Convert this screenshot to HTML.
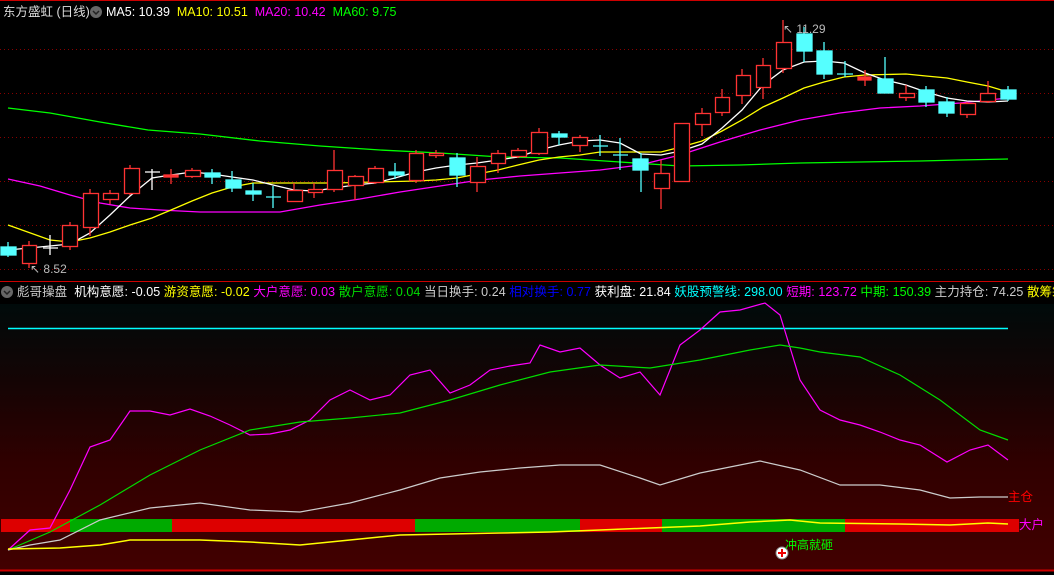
<!DOCTYPE html>
<html><head><meta charset="utf-8"><style>
html,body{margin:0;padding:0;background:#000;width:1054px;height:575px;overflow:hidden;font-family:"Liberation Sans","Noto Sans CJK SC",sans-serif;}
.t{position:absolute;font-size:12.5px;white-space:nowrap;line-height:16px;}
</style></head><body>
<div style="position:absolute;left:0;top:304px;width:1054px;height:266px;background:linear-gradient(#000a0a 0%,#150404 30%,#300000 60%,#420000 100%);"></div>
<svg width="1054" height="575" style="position:absolute;left:0;top:0">
<line x1="0" y1="0.5" x2="1054" y2="0.5" stroke="#c00" />
<line x1="0" y1="281.5" x2="1054" y2="281.5" stroke="#c00"/>
<line x1="0" y1="570.5" x2="1054" y2="570.5" stroke="#c00" stroke-width="2"/>
<g stroke="#800" stroke-dasharray="1,3">
<line x1="0" y1="49.5" x2="1054" y2="49.5"/><line x1="0" y1="93.5" x2="1054" y2="93.5"/><line x1="0" y1="137.5" x2="1054" y2="137.5"/><line x1="0" y1="181.5" x2="1054" y2="181.5"/><line x1="0" y1="225.5" x2="1054" y2="225.5"/><line x1="0" y1="269.5" x2="1054" y2="269.5"/>
</g>
<g fill="none" stroke-width="1.3">
<polyline stroke="#0f0" points="8,108 50,113 100,122 148,130 200,134 260,141 320,146 380,150 440,153 500,157 560,158 620,162 680,166 740,165 800,163 860,162 920,161 960,160 1008,159"/>
<polyline stroke="#f0f" points="8,179 40,186 70,195 100,203 130,208 160,210 200,212 240,212 280,212 320,205 360,199 400,192 440,186 480,180 520,176 560,173 600,170 640,165 680,155 720,142 760,130 800,120 840,113 880,108 920,106 960,103 1008,98"/>
<polyline stroke="#ff0" points="8,225 50,240 70,242 90,238 110,232 130,225 152,218 171,210 192,201 212,193 232,187 253,183 294,183 334,183 375,182 416,181 436,180 457,178 477,174 498,170 518,165 539,160 559,157 580,155 600,152 661,152 681,147 702,141 722,131 742,120 763,107 783,98 804,88 824,82 844,77 865,75 906,74 926,76 947,78 967,82 988,86 1008,92"/>
<polyline stroke="#fff" points="8,250 50,246 70,244 90,233 110,215 130,196 152,178 171,175 192,172 212,174 232,177 253,180 273,185 294,190 314,191 334,188 355,185 375,183 395,178 416,172 436,168 457,165 477,163 498,160 518,157 539,150 559,145 580,141 600,140 620,143 641,154 661,155 681,151 702,144 722,128 742,110 763,85 783,70 804,62 824,61 844,63 865,73 885,80 906,85 926,92 947,98 967,101 988,102 1008,101"/>
</g>
<g stroke="#f33" fill="none" stroke-width="1.3">
<path d="M29 241V268M70 222V250M90 189V236M110 190V204M130 165V195M171 169V184M192 168V178M294 183V201M314 183V198M334 150V192M355 175V200M375 166V184M416 150V183M436 150V158M477 157V192M498 150V173M518 148V158M539 128V155M580 135V152M661 160V209M681 123V181M702 108V136M722 89V116M742 69V104M763 58V99M783 20V73M865 70V86M906 85V101M967 102V118M988 81V103"/>
<rect x="22.5" y="245.5" width="14" height="18" fill="#000"/><rect x="62.5" y="225.5" width="15" height="21" fill="#000"/><rect x="83.5" y="193.5" width="15" height="34" fill="#000"/><rect x="103.5" y="193.5" width="15" height="6" fill="#000"/><rect x="124.5" y="168.5" width="15" height="25" fill="#000"/><rect x="164" y="175" width="14" height="2" fill="#f33"/><rect x="185.5" y="170.5" width="15" height="6" fill="#000"/><rect x="287.5" y="190.5" width="15" height="11" fill="#000"/><rect x="308.5" y="189.5" width="14" height="3" fill="#000"/><rect x="327.5" y="170.5" width="15" height="19" fill="#000"/><rect x="348.5" y="176.5" width="15" height="9" fill="#000"/><rect x="368.5" y="168.5" width="15" height="14" fill="#000"/><rect x="409.5" y="153.5" width="14" height="27" fill="#000"/><rect x="429.5" y="153.5" width="14" height="2" fill="#000"/><rect x="470.5" y="166.5" width="15" height="16" fill="#000"/><rect x="491.5" y="153.5" width="14" height="10" fill="#000"/><rect x="511.5" y="150.5" width="15" height="6" fill="#000"/><rect x="531.5" y="132.5" width="16" height="21" fill="#000"/><rect x="572.5" y="137.5" width="15" height="8" fill="#000"/><rect x="654.5" y="173.5" width="15" height="15" fill="#000"/><rect x="674.5" y="123.5" width="15" height="58" fill="#000"/><rect x="695.5" y="113.5" width="15" height="11" fill="#000"/><rect x="715.5" y="97.5" width="14" height="15" fill="#000"/><rect x="736.5" y="75.5" width="14" height="20" fill="#000"/><rect x="756.5" y="65.5" width="14" height="22" fill="#000"/><rect x="776.5" y="42.5" width="15" height="26" fill="#000"/><rect x="858" y="77" width="13" height="3" fill="#f33"/><rect x="899.5" y="93.5" width="15" height="4" fill="#000"/><rect x="960.5" y="103.5" width="15" height="11" fill="#000"/><rect x="980.5" y="93.5" width="15" height="8" fill="#000"/>
</g>
<g stroke="#5ff" fill="#5ff" stroke-width="1.3">
<path d="M8 242V257M212 169V184M232 171V192M253 183V201M273 186V208M266 197H281M395 163V179M457 153V187M559 131V145M600 135V156M593 146H608M620 138V170M613 155H628M641 153V192M804 27V62M824 42V79M845 61V77M837 74H853M885 57V79M926 86V107M947 97V117M1008 86V101"/>
<rect x="1" y="247" width="15" height="8"/><rect x="205" y="173" width="15" height="4"/><rect x="226" y="180" width="15" height="8"/><rect x="246" y="191" width="15" height="3"/><rect x="389" y="172" width="15" height="3"/><rect x="450" y="158" width="15" height="17"/><rect x="552" y="134" width="15" height="3"/><rect x="633" y="159" width="15" height="11"/><rect x="797" y="34" width="15" height="17"/><rect x="817" y="51" width="15" height="23"/><rect x="878" y="79" width="15" height="14"/><rect x="919" y="90" width="15" height="12"/><rect x="939" y="102" width="15" height="11"/><rect x="1001" y="90" width="15" height="9"/>
</g>
<g stroke="#fff" stroke-width="1.3"><path d="M50 235V255M43 248H58M152 169V190M145 172H160"/></g>
<text x="30" y="273" fill="#bbb" font-size="12" font-family="Liberation Sans">↖ 8.52</text>
<text x="783" y="33" fill="#bbb" font-size="12" font-family="Liberation Sans">↖ 11.29</text>
<line x1="8" y1="328.5" x2="1008" y2="328.5" stroke="#0ff" stroke-width="1.5"/>
<rect x="1" y="519" width="69" height="13" fill="#d00"/><rect x="70" y="519" width="102" height="13" fill="#0a0"/><rect x="172" y="519" width="243" height="13" fill="#d00"/><rect x="415" y="519" width="165" height="13" fill="#0a0"/><rect x="580" y="519" width="82" height="13" fill="#d00"/><rect x="662" y="519" width="183" height="13" fill="#0a0"/><rect x="845" y="519" width="174" height="13" fill="#d00"/>
<g fill="none" stroke-width="1.2">
<polyline stroke="#f0f" points="8,550 30,530 50,528 70,490 90,447 110,440 130,411 150,411 170,415 190,409 210,416 230,425 250,435 270,434 290,430 310,420 330,400 350,390 370,400 390,395 410,375 430,370 450,393 470,385 490,370 510,366 530,363 540,345 560,352 580,348 600,365 620,378 640,372 660,395 680,345 700,330 720,312 740,310 765,303 780,315 800,380 820,410 840,420 860,425 880,432 900,440 920,445 947,462 970,450 988,445 1008,460"/>
<polyline stroke="#0d0" points="8,550 50,532 100,505 150,475 200,450 250,430 300,422 350,418 400,413 450,400 500,385 550,372 600,365 650,368 700,360 750,350 780,345 800,348 820,352 860,357 900,375 940,400 980,430 1008,440"/>
<polyline stroke="#ccc" points="8,550 30,545 60,540 100,520 150,508 200,503 250,510 300,512 350,503 400,490 440,478 480,472 520,468 560,465 600,465 640,478 660,485 700,473 740,465 760,461 800,470 840,485 880,485 920,490 950,498 980,497 1008,497"/>
<polyline stroke="#ff0" stroke-width="1.5" points="8,549 60,548 100,545 130,540 200,540 250,542 300,545 350,540 400,535 450,534 500,533 550,532 600,530 650,528 700,526 750,522 790,520 820,523 900,524 950,525 988,523 1008,524"/>
</g>
<circle cx="782" cy="553" r="6" fill="#fff" stroke="#888"/>
<path d="M778 553H786M782 549V557" stroke="#e00" stroke-width="2"/>
<circle cx="7" cy="292" r="6" fill="#666"/><path d="M4 291l3 3 3-3" stroke="#222" fill="none" stroke-width="1.5"/>
<circle cx="96" cy="12" r="6" fill="#666"/><path d="M93 11l3 3 3-3" stroke="#222" fill="none" stroke-width="1.5"/>
</svg>
<div class="t" style="left:3px;top:4px;color:#ddd;font-size:12.5px">东方盛虹 (日线)</div>
<div class="t" style="left:106px;top:4px;font-size:12.5px"><span style="color:#fff">MA5: 10.39</span>&nbsp; <span style="color:#ff0">MA10: 10.51</span>&nbsp; <span style="color:#f0f">MA20: 10.42</span>&nbsp; <span style="color:#0f0">MA60: 9.75</span></div>
<div class="t" style="left:17px;top:284px;letter-spacing:0.05px"><span style="color:#ccc">彪哥操盘</span>&nbsp; <span style="color:#fff">机构意愿: -0.05</span> <span style="color:#ff0">游资意愿: -0.02</span> <span style="color:#f0f">大户意愿: 0.03</span> <span style="color:#0d0">散户意愿: 0.04</span> <span style="color:#ccc">当日换手: 0.24</span> <span style="color:#00f">相对换手: 0.77</span> <span style="color:#fff">获利盘: 21.84</span> <span style="color:#0ff">妖股预警线: 298.00</span> <span style="color:#f0f">短期: 123.72</span> <span style="color:#0f0">中期: 150.39</span> <span style="color:#ccc">主力持仓: 74.25</span> <span style="color:#ff0">散筹筹码集</span></div>
<div class="t" style="left:1008px;top:489px;color:#f00">主仓</div>
<div class="t" style="left:1019px;top:517px;color:#f0f">大户</div>
<div class="t" style="left:785px;top:537px;color:#0f0;font-size:12px">冲高就砸</div>
</body></html>
